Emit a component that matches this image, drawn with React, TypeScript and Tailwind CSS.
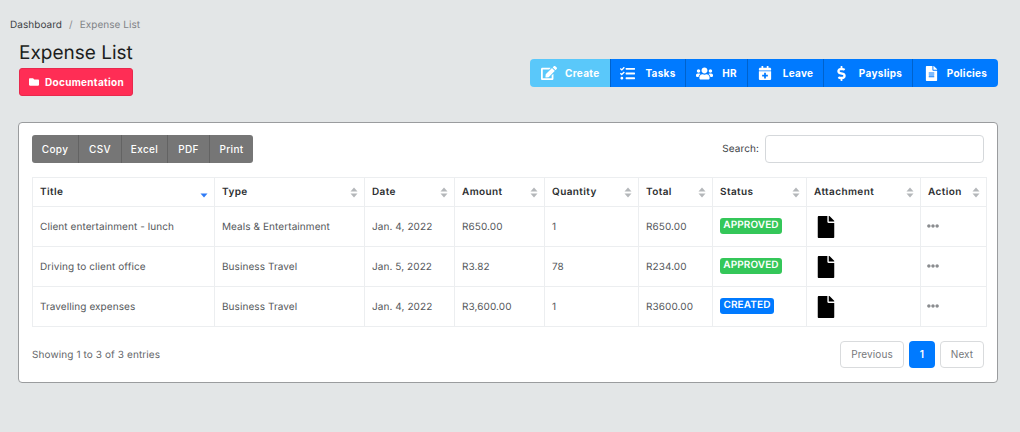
import { FaEdit, FaTasks, FaUsers, FaCalendarPlus, FaDollarSign, FaFileAlt, FaFolder, FaFile, FaEllipsisH } from 'react-icons/fa'

const navButtons = [
  { label: 'Create', icon: FaEdit, iconSize: 'text-[16px]', cls: 'w-[80px] bg-[#5ac8fa] rounded-l-[4px] gap-[8px] pl-[11px] justify-start' },
  { label: 'Tasks', icon: FaTasks, iconSize: 'text-[15px]', cls: 'w-[75px] gap-[10px] border-l border-[#0062cc]' },
  { label: 'HR', icon: FaUsers, iconSize: 'text-[17px]', cls: 'w-[62px] gap-[9px] border-l border-[#0062cc]' },
  { label: 'Leave', icon: FaCalendarPlus, iconSize: 'text-[14px]', cls: 'w-[76px] gap-[11px] border-l border-[#0062cc]' },
  { label: 'Payslips', icon: FaDollarSign, iconSize: 'text-[15px]', cls: 'w-[89px] gap-[10px] border-l border-[#0062cc]' },
  { label: 'Policies', icon: FaFileAlt, iconSize: 'text-[15px]', cls: 'w-[86px] gap-[8px] border-l border-[#0062cc] rounded-r-[4px]' },
]

const columns = [
  { label: 'Title', width: 'w-[182px]', active: true },
  { label: 'Type', width: 'w-[150px]' },
  { label: 'Date', width: 'w-[90px]' },
  { label: 'Amount', width: 'w-[90px]' },
  { label: 'Quantity', width: 'w-[94px]' },
  { label: 'Total', width: 'w-[74px]' },
  { label: 'Status', width: 'w-[94px]' },
  { label: 'Attachment', width: 'w-[114px]' },
  { label: 'Action', width: 'w-[66px]' },
]

const rows = [
  { title: 'Client entertainment - lunch', type: 'Meals & Entertainment', date: 'Jan. 4, 2022', amount: 'R650.00', qty: '1', total: 'R650.00', status: 'APPROVED' },
  { title: 'Driving to client office', type: 'Business Travel', date: 'Jan. 5, 2022', amount: 'R3.82', qty: '78', total: 'R234.00', status: 'APPROVED' },
  { title: 'Travelling expenses', type: 'Business Travel', date: 'Jan. 4, 2022', amount: 'R3,600.00', qty: '1', total: 'R3600.00', status: 'CREATED' },
]

function SortArrows({ active }: { active?: boolean }) {
  return (
    <svg width="8" height="11" viewBox="0 0 8 11" className="shrink-0">
      {!active && <path d="M4 0.5 L7.5 4.5 H0.5 Z" fill="#b4b7ba" />}
      <path d="M4 10.5 L7.5 6.5 H0.5 Z" fill={active ? '#2f7bf6' : '#b4b7ba'} />
    </svg>
  )
}

export default function App() {
  return (
    <div className="w-[1020px] h-[432px] overflow-hidden bg-[#e3e6e7] font-['Inter',sans-serif] [text-rendering:geometricPrecision] pt-[18px]">
      <div className="flex items-center h-[14px] pl-[10px] text-[10px] leading-[14px] tracking-[0.05px]">
        <span className="text-[#3e4246]">Dashboard</span>
        <span className="text-[#8a8d90] mx-[7px]">/</span>
        <span className="text-[#808386]">Expense List</span>
      </div>

      <div className="flex justify-between items-start pl-[19px] pr-[22px] mt-[8px]">
        <div>
          <h1 className="text-[19px] leading-[26px] text-[#1c1e20] font-normal">Expense List</h1>
          <button className="mt-[2px] flex items-center gap-[6px] w-[114px] h-[28px] pl-[9px] bg-[#ff2d55] border border-[#e8294d] rounded-[3px] text-white text-[10px] font-bold tracking-[0.3px]">
            <FaFolder className="text-[10px]" />
            Documentation
          </button>
        </div>
        <div className="flex h-[28px] mt-[19px]">
          {navButtons.map((b) => (
            <button key={b.label} className={`flex items-center justify-center text-white text-[10px] font-bold tracking-[0.3px] ${b.label === 'Create' ? '' : 'bg-[#007aff]'} ${b.cls}`}>
              <b.icon className={b.iconSize} />
              {b.label}
            </button>
          ))}
        </div>
      </div>

      <div className="mx-[18px] mt-[26px] w-[980px] h-[261px] bg-white border border-[#9a9c9e] rounded-[4px] px-[13px] pt-[12px]">
        <div className="flex justify-between items-center h-[28px]">
          <div className="flex h-[28px] rounded-[3px] overflow-hidden text-white text-[10px] font-medium tracking-[0.35px]">
            <button className="w-[46px] bg-[#767676]">Copy</button>
            <button className="w-[43px] bg-[#767676] border-l border-[#636363]">CSV</button>
            <button className="w-[46px] bg-[#767676] border-l border-[#636363]">Excel</button>
            <button className="w-[42px] bg-[#767676] border-l border-[#636363]">PDF</button>
            <button className="w-[44px] bg-[#767676] border-l border-[#636363]">Print</button>
          </div>
          <label className="flex items-center gap-[6px] text-[10px] tracking-[0.1px] text-[#3e4246]">
            Search:
            <input className="w-[219px] h-[28px] bg-white border border-[#d5d8db] rounded-[4px]" aria-label="Search" />
          </label>
        </div>

        <table className="table-fixed border-collapse w-[954px] mt-[14px] text-[10px] tracking-[0.08px]">
          <thead>
            <tr className="h-[29px]">
              {columns.map((c) => (
                <th key={c.label} className={`${c.width} border border-[#eceef0] pl-[7px] pr-[6px] font-semibold text-left text-[#2c2e30]`}>
                  <div className="flex items-center justify-between tracking-[0.4px]">
                    {c.label}
                    <SortArrows active={c.active} />
                  </div>
                </th>
              ))}
            </tr>
          </thead>
          <tbody className="text-[#55585b]">
            {rows.map((r) => (
              <tr key={r.title} className="h-[40px]">
                <td className="border border-[#eceef0] pl-[7px] pt-[1px]">{r.title}</td>
                <td className="border border-[#eceef0] pl-[7px] pt-[1px]">{r.type}</td>
                <td className="border border-[#eceef0] pl-[7px] pt-[1px]">{r.date}</td>
                <td className="border border-[#eceef0] pl-[7px] pt-[1px]">{r.amount}</td>
                <td className="border border-[#eceef0] pl-[7px] pt-[1px]">{r.qty}</td>
                <td className="border border-[#eceef0] pl-[7px] pt-[1px]">{r.total}</td>
                <td className="border border-[#eceef0] pl-[7px]">
                  <span className={`inline-flex items-center justify-center h-[16px] rounded-[3px] text-white text-[10px] font-semibold tracking-[0.1px] -translate-y-[1px] ${r.status === 'APPROVED' ? 'w-[62px] bg-[#34c759]' : 'w-[54px] bg-[#007aff]'}`}>
                    {r.status}
                  </span>
                </td>
                <td className="border border-[#eceef0] pl-[8px]">
                  <FaFile className="text-[22px] text-black" />
                </td>
                <td className="border border-[#eceef0] pl-[6px]">
                  <FaEllipsisH className="text-[12px] text-[#8a8c8f] -translate-y-[1px]" />
                </td>
              </tr>
            ))}
          </tbody>
        </table>

        <div className="flex justify-between items-center mt-[14px] text-[10px] tracking-[0.1px]">
          <span className="text-[#636669] pt-[2px]">Showing 1 to 3 of 3 entries</span>
          <div className="flex gap-[5px] h-[27px]">
            <button className="w-[64px] border border-[#d9dbdd] rounded-[4px] text-[#77797c]">Previous</button>
            <button className="w-[26px] bg-[#007aff] rounded-[4px] text-white font-semibold">1</button>
            <button className="w-[44px] border border-[#d9dbdd] rounded-[4px] text-[#77797c]">Next</button>
          </div>
        </div>
      </div>
    </div>
  )
}
